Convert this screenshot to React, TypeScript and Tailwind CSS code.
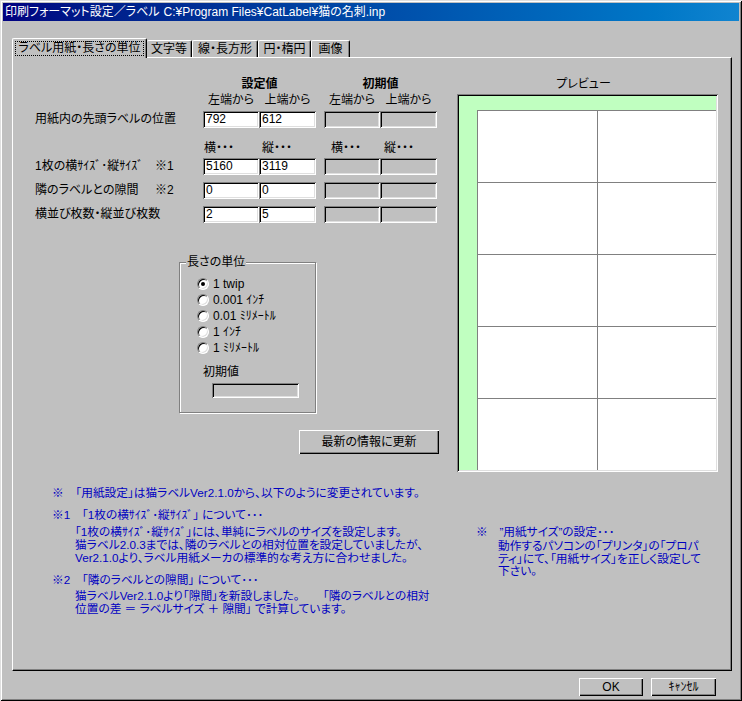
import React from "react";

const FONT =
  "[font-family:'Liberation_Sans','Noto_Sans_CJK_JP',sans-serif] [font-feature-settings:'palt']";
const SUNKEN =
  "shadow-[inset_1px_1px_0_#808080,inset_-1px_-1px_0_#fff,inset_2px_2px_0_#000,inset_-2px_-2px_0_#dfdfdf]";
const RAISED =
  "shadow-[inset_1px_1px_0_#fff,inset_-1px_-1px_0_#000,inset_-2px_-2px_0_#808080]";

function Field({ value, disabled }: { value?: string; disabled?: boolean }) {
  return (
    <div
      className={`h-[17px] ${SUNKEN} ${disabled ? "bg-[#c0c0c0]" : "bg-white"} pl-[3px] text-[12px] leading-[17px]`}
    >
      {value}
    </div>
  );
}

function Row({
  label,
  mark,
  v1,
  v2,
  mt,
}: {
  label: string;
  mark?: string;
  v1: string;
  v2: string;
  mt: string;
}) {
  return (
    <div className={`flex h-[17px] ${mt}`}>
      <div className="w-[168px] flex items-center leading-[17px]">
        <span className="w-[120px] whitespace-nowrap">{label}</span>
        {mark && <span>{mark}</span>}
      </div>
      <div className="w-[56px]">
        <Field value={v1} />
      </div>
      <div className="w-[57px]">
        <Field value={v2} />
      </div>
      <div className="w-[8px]" />
      <div className="w-[56px]">
        <Field disabled />
      </div>
      <div className="w-[57px]">
        <Field disabled />
      </div>
    </div>
  );
}

function Radio({ label, checked }: { label: string; checked?: boolean }) {
  return (
    <div className="flex items-center h-[16px]">
      <div className="w-[12px] h-[12px] rounded-full border border-t-[#808080] border-l-[#808080] border-b-white border-r-white bg-white shadow-[inset_1px_1px_0_#000,inset_-1px_-1px_0_#dfdfdf] flex items-center justify-center">
        {checked && <div className="w-[4px] h-[4px] rounded-full bg-black" />}
      </div>
      <span className="ml-[4px] leading-[16px] whitespace-nowrap">{label}</span>
    </div>
  );
}

export default function App() {
  return (
    <div
      className={`w-[742px] h-[701px] bg-[#c0c0c0] ${FONT} text-[12px] text-black pt-[3px] overflow-hidden shadow-[inset_1px_1px_0_#dfdfdf,inset_-1px_-1px_0_#000,inset_2px_2px_0_#fff,inset_-2px_-2px_0_#808080]`}
    >
      {/* title bar */}
      <div className="mx-[3px] h-[18px] bg-linear-to-r from-[#000080] to-[#1084d0] text-white flex items-center pl-[2px] leading-none whitespace-nowrap">
        <span>印刷フォーマット設定／ラベル</span>
        <span className="ml-[4px]">C:¥Program Files¥CatLabel¥猫の名刺.inp</span>
      </div>

      {/* tabs */}
      <div className="ml-[12px] mt-[17px] flex items-end h-[19px]">
        <div className="relative z-10 -mb-[1px] h-[20px] w-[135px] bg-[#c0c0c0] border-l border-t border-white border-r border-r-black rounded-t-[2px] shadow-[inset_-1px_0_0_#808080] flex items-start justify-center pt-[2px]">
          <span className="border border-dotted border-black px-[2px] leading-[13px] whitespace-nowrap">
            ラベル用紙・長さの単位
          </span>
        </div>
        <div className="h-[17px] w-[45px] border-t border-white border-r border-r-black rounded-t-[2px] shadow-[inset_-1px_0_0_#808080] flex items-center justify-center leading-[16px] whitespace-nowrap">
          文字等
        </div>
        <div className="h-[17px] w-[66px] border-l border-t border-white border-r border-r-black rounded-t-[2px] shadow-[inset_-1px_0_0_#808080] flex items-center justify-center leading-[16px] whitespace-nowrap">
          線・長方形
        </div>
        <div className="h-[17px] w-[53px] border-l border-t border-white border-r border-r-black rounded-t-[2px] shadow-[inset_-1px_0_0_#808080] flex items-center justify-center leading-[16px] whitespace-nowrap">
          円・楕円
        </div>
        <div className="h-[17px] w-[39px] border-l border-t border-white border-r border-r-black rounded-t-[2px] shadow-[inset_-1px_0_0_#808080] flex items-center justify-center leading-[16px] whitespace-nowrap">
          画像
        </div>
      </div>

      {/* panel */}
      <div className="ml-[12px] w-[720px] h-[614px] border-l border-t border-white border-r border-b border-r-black border-b-black shadow-[inset_-1px_-1px_0_#808080]">
        <div className="flex">
          {/* left column */}
          <div className="w-[444px] pl-[22px]">
            <div className="mt-[18px] h-[16px] flex font-bold leading-[16px]">
              <div className="w-[168px]" />
              <div className="w-[113px] text-center">設定値</div>
              <div className="w-[8px]" />
              <div className="w-[113px] text-center">初期値</div>
            </div>
            <div className="h-[16px] flex leading-[16px] whitespace-nowrap">
              <div className="w-[168px]" />
              <div className="w-[56px] text-center">左端から</div>
              <div className="w-[57px] text-center">上端から</div>
              <div className="w-[8px]" />
              <div className="w-[56px] text-center">左端から</div>
              <div className="w-[57px] text-center">上端から</div>
            </div>
            <Row label="用紙内の先頭ラベルの位置" v1="792" v2="612" mt="mt-[3px]" />
            <div className="mt-[12px] h-[16px] flex leading-[16px] whitespace-nowrap">
              <div className="w-[168px]" />
              <div className="w-[56px] pl-[1px]">横・・・</div>
              <div className="w-[57px] pl-[3px]">縦・・・</div>
              <div className="w-[8px]" />
              <div className="w-[56px] pl-[7px]">横・・・</div>
              <div className="w-[57px] pl-[4px]">縦・・・</div>
            </div>
            <Row label="1枚の横ｻｲｽﾞ･縦ｻｲｽﾞ" mark="※1" v1="5160" v2="3119" mt="mt-[2px]" />
            <Row label="隣のラベルとの隙間" mark="※2" v1="0" v2="0" mt="mt-[7px]" />
            <Row label="横並び枚数・縦並び枚数" v1="2" v2="5" mt="mt-[7px]" />

            {/* group box */}
            <div className="relative ml-[144px] mt-[39px] w-[137px] h-[151px] border border-[#808080] shadow-[inset_1px_1px_0_#fff,1px_1px_0_#fff] pt-[13px] pl-[17px]">
              <span className="absolute -top-[9px] left-[6px] bg-[#c0c0c0] px-[1px] leading-[16px] whitespace-nowrap">
                長さの単位
              </span>
              <Radio label="1 twip" checked />
              <Radio label="0.001 ｲﾝﾁ" />
              <Radio label="0.01 ﾐﾘﾒｰﾄﾙ" />
              <Radio label="1 ｲﾝﾁ" />
              <Radio label="1 ﾐﾘﾒｰﾄﾙ" />
              <div className="mt-[8px] ml-[6px] h-[16px] leading-[16px]">初期値</div>
              <div className={`mt-[3px] ml-[15px] w-[87px] h-[15px] ${SUNKEN}`} />
            </div>

            <button
              className={`block ml-[264px] mt-[17px] w-[140px] h-[24px] bg-[#c0c0c0] ${RAISED} text-[12px] leading-[24px] text-center`}
            >
              最新の情報に更新
            </button>
          </div>

          {/* preview */}
          <div className="w-[261px]">
            <div className="mt-[18px] h-[16px] leading-[16px] text-center pr-[8px]">プレビュー</div>
            <div className={`mt-[2px] w-[261px] h-[378px] p-[2px] ${SUNKEN}`}>
              <div className="w-[257px] h-[374px] bg-[#c0ffc0] overflow-hidden pl-[18px] pt-[14px]">
                <div className="grid grid-cols-[120px_120px] grid-rows-[repeat(5,72px)] w-[240px]">
                  {Array.from({ length: 10 }).map((_, i) => (
                    <div key={i} className="bg-white border-l border-t border-[#808080]" />
                  ))}
                </div>
              </div>
            </div>
          </div>
        </div>

        {/* notes */}
        <div className="mt-[14px] pl-[39px] text-[#0000c0] text-[11.7px] leading-[13px] whitespace-nowrap">
          <div>※　「用紙設定」は猫ラベルVer2.1.0から、以下のように変更されています。</div>
          <div className="mt-[9px] flex">
            <div className="w-[424px]">
              <div>※1　「1枚の横ｻｲｽﾞ･縦ｻｲｽﾞ」 について･･･</div>
              <div className="mt-[4px] pl-[23px]">
                <div>「1枚の横ｻｲｽﾞ･縦ｻｲｽﾞ」には、単純にラベルのサイズを設定します。</div>
                <div>猫ラベル2.0.3までは、隣のラベルとの相対位置を設定していましたが、</div>
                <div>Ver2.1.0より、ラベル用紙メーカの標準的な考え方に合わせました。</div>
              </div>
              <div className="mt-[9px]">※2　「隣のラベルとの隙間」 について･･･</div>
              <div className="mt-[3px] pl-[23px]">
                <div>猫ラベルVer2.1.0より「隙間」を新設しました。　　「隣のラベルとの相対</div>
                <div>位置の差 ＝ ラベルサイズ ＋ 隙間」 で計算しています。</div>
              </div>
            </div>
            <div className="mt-[17px]">
              <div>※　”用紙サイズ”の設定･･･</div>
              <div className="mt-[2px] pl-[22px] leading-[12.5px]">
                <div>動作するパソコンの「プリンタ」の「プロパ</div>
                <div>ティ」にて、「用紙サイズ」を正しく設定して</div>
                <div>下さい。</div>
              </div>
            </div>
          </div>
        </div>
      </div>

      {/* bottom buttons */}
      <div className="mt-[7px] flex justify-end pr-[26px] gap-[8px]">
        <button className={`w-[64px] h-[18px] bg-[#c0c0c0] ${RAISED} text-[12px] leading-[18px]`}>OK</button>
        <button className={`w-[65px] h-[18px] bg-[#c0c0c0] ${RAISED} text-[12px] leading-[18px]`}>ｷｬﾝｾﾙ</button>
      </div>
    </div>
  );
}
